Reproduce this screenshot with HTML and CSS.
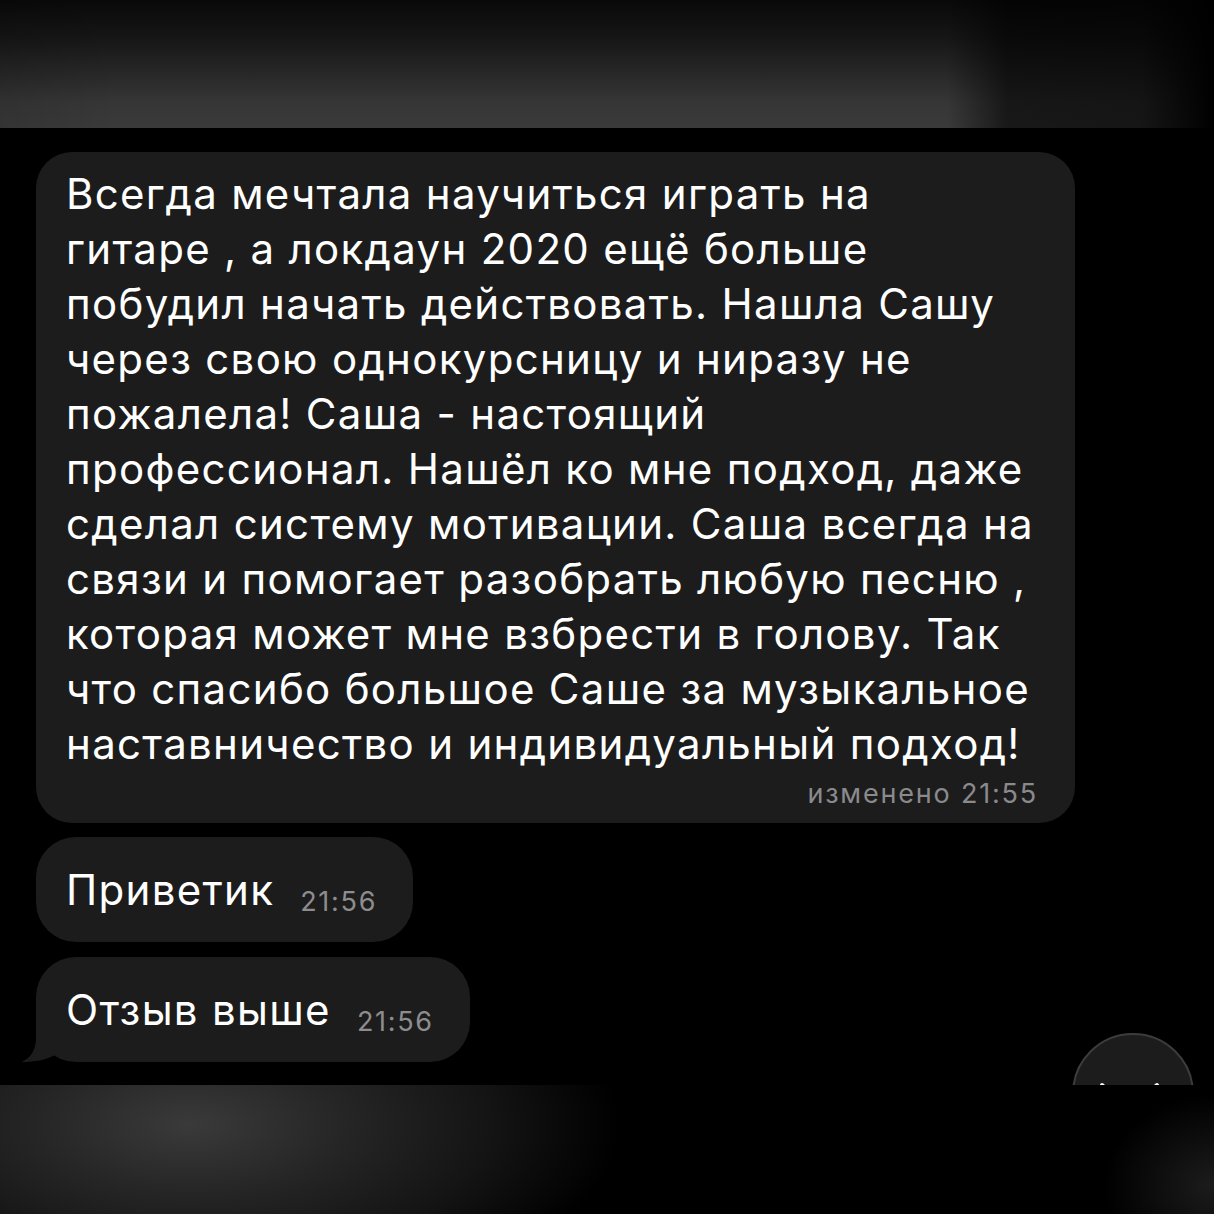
FILE: index.html
```html
<!DOCTYPE html>
<html lang="ru">
<head>
<meta charset="utf-8">
<title>Отзыв</title>
<link rel="stylesheet" href="styles.css">
</head>
<body>
<div class="screen">
  <div class="top-band"></div>
  <div class="chat">
    <div class="bubble bubble-long">
      <p class="msg-text">Всегда мечтала научиться играть на<br>гитаре , а локдаун 2020 ещё больше<br>побудил начать действовать. Нашла Сашу<br>через свою однокурсницу и ниразу не<br>пожалела! Саша - настоящий<br>профессионал. Нашёл ко мне подход, даже<br>сделал систему мотивации. Саша всегда на<br>связи и помогает разобрать любую песню ,<br>которая может мне взбрести в голову. Так<br>что спасибо большое Саше за музыкальное<br>наставничество и индивидуальный подход!</p>
      <div class="meta">изменено 21:55</div>
    </div>
    <div class="bubble bubble-short">
      <span class="short-text">Приветик</span><span class="time">21:56</span>
    </div>
    <div class="bubble bubble-short bubble-tail">
      <span class="short-text">Отзыв выше</span><span class="time">21:56</span>
      <svg class="tail" width="60" height="40" viewBox="0 0 60 40"><path d="M16 0 L16 16 C16 29 10 36 2 40 C14 40 26 38 35 33 L40 0 Z" fill="#1c1c1c"/></svg>
    </div>
    <div class="scroll-btn">
      <svg width="120" height="120" viewBox="0 0 120 120"><path d="M30 52 L57.5 78 L85 52" fill="none" stroke="#ffffff" stroke-width="4" stroke-linecap="round" stroke-linejoin="round"/></svg>
    </div>
  </div>
  <div class="bottom-band"></div>
</div>
</body>
</html>
```
FILE: styles.css
```css
html, body {
  margin: 0;
  padding: 0;
  background: #000;
}
.screen {
  width: 1214px;
  height: 1214px;
  overflow: hidden;
  display: flex;
  flex-direction: column;
  font-family: "Inter", "Noto Sans", sans-serif;
  color: #fff;
}
.top-band {
  height: 128px;
  flex: none;
  background:
    linear-gradient(to right, rgba(0,0,0,0.1) 0%, rgba(0,0,0,0) 10%, rgba(0,0,0,0) 78%, rgba(0,0,0,0.58) 83%, rgba(0,0,0,0.62) 94%, #000 100%),
    linear-gradient(to bottom, #090909 0%, #161616 30%, #262626 55%, #363636 80%, #3a3a3a 100%);
}
.chat {
  position: relative;
  height: 957px;
  flex: none;
  overflow: hidden;
  background: #000;
  padding: 24px 0 0 36px;
  box-sizing: border-box;
  display: flex;
  flex-direction: column;
  align-items: flex-start;
  gap: 14px;
}
.bubble {
  background: #1c1c1c;
  border-radius: 36px;
  box-sizing: border-box;
  position: relative;
}
.bubble-long {
  width: 1039px;
  height: 671px;
  padding: 14px 38px 0 30px;
}
.msg-text {
  margin: 0;
  font-size: 42px;
  line-height: 55px;
  letter-spacing: 1.3px;
  white-space: nowrap;
}
.meta {
  text-align: right;
  font-size: 27px;
  line-height: 30px;
  margin-top: 8px;
  color: #8a8a8c;
  letter-spacing: 1.8px;
  margin-right: -1px;
}
.bubble-short {
  height: 105px;
  padding: 0 38px 0 30px;
  display: flex;
  align-items: center;
  border-radius: 40px;
}
.bubble-tail {
  margin-top: 1px;
}
.short-text {
  font-size: 42px;
  line-height: 50px;
  letter-spacing: 1.3px;
}
.time {
  font-size: 27px;
  color: #8d8d8f;
  margin-left: 26px;
  position: relative;
  top: 12px;
  letter-spacing: 1.7px;
  margin-right: -2px;
}
.tail {
  position: absolute;
  left: -16px;
  bottom: 0;
}
.scroll-btn {
  position: absolute;
  left: 1072px;
  top: 905px;
  width: 122px;
  height: 122px;
  border-radius: 50%;
  background: #1c1c1c;
  border: 2px solid #3c3c3c;
  box-sizing: border-box;
}
.scroll-btn svg {
  display: block;
  margin: -2px 0 0 -2px;
}
.bottom-band {
  height: 129px;
  flex: none;
  background:
    radial-gradient(ellipse 110px 90px at 1214px 100px, #1c1c1c 0%, rgba(0,0,0,0) 100%),
    radial-gradient(ellipse 430px 190px at 190px 40px, #3a3a3a 0%, #262626 35%, #141414 70%, #000 100%);
}
```
